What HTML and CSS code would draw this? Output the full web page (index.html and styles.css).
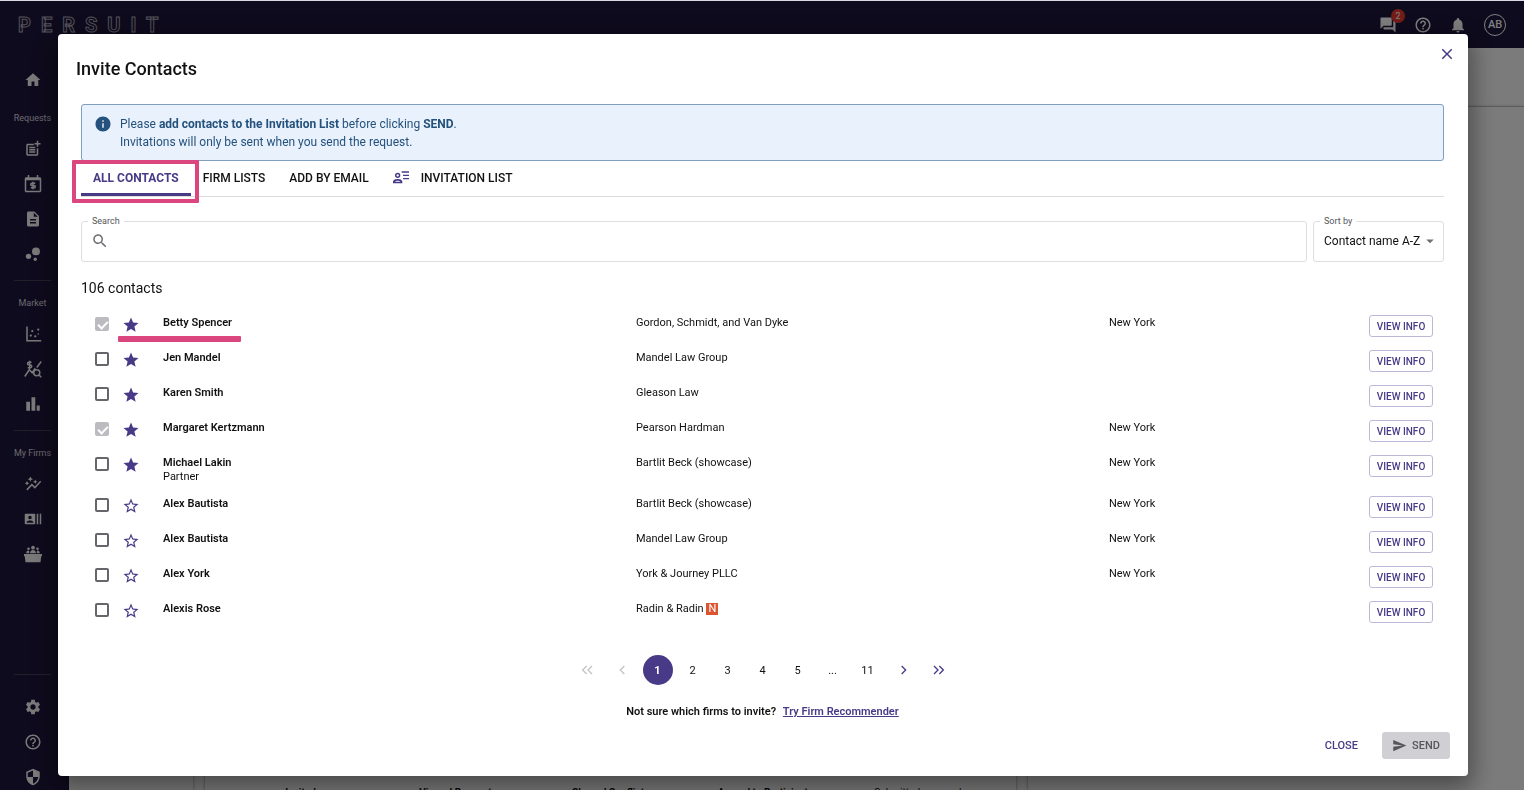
FILE: index.html
```html
<!DOCTYPE html>
<html lang="en">
<head>
    <meta charset="UTF-8">
    <meta name="viewport" content="width=device-width, initial-scale=1.0">
    <title>Invite Contacts</title>
    <link rel="stylesheet" href="styles.css">
</head>
<body>

    <!-- Icon definitions -->
    <svg class="icon-defs" aria-hidden="true">
        <symbol id="help" viewBox="0 0 24 24"><path d="M11 18h2v-2h-2v2zm1-16C6.48 2 2 6.48 2 12s4.48 10 10 10 10-4.48 10-10S17.52 2 12 2zm0 18c-4.41 0-8-3.59-8-8s3.59-8 8-8 8 3.59 8 8-3.59 8-8 8zm0-14c-2.21 0-4 1.79-4 4h2c0-1.1.9-2 2-2s2 .9 2 2c0 2-3 1.75-3 5h2c0-2.25 3-2.5 3-5 0-2.21-1.79-4-4-4z"/></symbol>
        <symbol id="star" viewBox="0 0 24 24"><path d="M12 17.27 18.18 21l-1.64-7.03L22 9.24l-7.19-.61L12 2 9.19 8.63 2 9.24l5.46 4.73L5.82 21z"/></symbol>
        <symbol id="star-border" viewBox="0 0 24 24"><path d="m22 9.24-7.19-.62L12 2 9.19 8.63 2 9.24l5.46 4.73L5.82 21 12 17.27 18.18 21l-1.63-7.03L22 9.24zM12 15.4l-3.76 2.27 1-4.28-3.32-2.88 4.38-.38L12 6.1l1.71 4.04 4.38.38-3.32 2.88 1 4.28L12 15.4z"/></symbol>
    </svg>

    <div class="app">
        <header class="topbar">
            <div class="logo">PERSUIT</div>
            <div class="topbar-actions">
                <button class="top-button" aria-label="Messages">
                    <svg class="icon" viewBox="0 0 24 24"><path d="M21 6h-2v9H6v2c0 .55.45 1 1 1h11l4 4V7c0-.55-.45-1-1-1zm-4 6V3c0-.55-.45-1-1-1H3c-.55 0-1 .45-1 1v14l4-4h10c.55 0 1-.45 1-1z"/></svg>
                    <span class="badge">2</span>
                </button>
                <button class="top-button" aria-label="Help"><svg class="icon"><use href="#help"/></svg></button>
                <button class="top-button" aria-label="Notifications">
                    <svg class="icon" viewBox="0 0 24 24"><path d="M12 22c1.1 0 2-.9 2-2h-4c0 1.1.89 2 2 2zm6-6v-5c0-3.07-1.64-5.64-4.5-6.32V4c0-.83-.67-1.5-1.5-1.5s-1.5.67-1.5 1.5v.68C7.63 5.36 6 7.92 6 11v5l-2 2v1h16v-1l-2-2z"/></svg>
                </button>
                <button class="avatar">AB</button>
            </div>
        </header>

        <div class="main">
            <nav class="sidebar">
                <a href="#" class="nav-item" aria-label="Home"><svg class="icon" viewBox="0 0 24 24"><path d="M10 20v-6h4v6h5v-8h3L12 3 2 12h3v8z"/></svg></a>

                <div class="nav-label">Requests</div>
                <a href="#" class="nav-item" aria-label="New request"><svg class="icon" viewBox="0 0 24 24"><path d="M17 19H5V7h8V5H5c-1.1 0-2 .9-2 2v12c0 1.1.9 2 2 2h12c1.1 0 2-.9 2-2v-8h-2z"/><path d="M19 1h-2v3h-3v2h3v3h2V6h3V4h-3zM7 9h8v2H7zM7 12h8v2H7zM7 15h8v2H7z"/></svg></a>
                <a href="#" class="nav-item" aria-label="Billing"><svg class="icon" viewBox="0 0 24 24"><path d="M21 3h-2V0h-2v3H7V0H5v3H3c-1.1 0-2 .9-2 2v16c0 1.1.9 2 2 2h18c1.1 0 2-.9 2-2V5c0-1.1-.9-2-2-2zm0 18H3V7h18z"/><path class="line" d="M15 11h-4.5a1.5 1.5 0 0 0 0 3h3a1.5 1.5 0 0 1 0 3H9M12 9v10"/></svg></a>
                <a href="#" class="nav-item" aria-label="Documents"><svg class="icon" viewBox="0 0 24 24"><path d="M14 2H6c-1.1 0-2 .9-2 2v16c0 1.1.9 2 2 2h12c1.1 0 2-.9 2-2V8l-6-6zm2 16H8v-2h8v2zm0-4H8v-2h8v2zm-3-5V3.5L18.5 9H13z"/></svg></a>
                <a href="#" class="nav-item" aria-label="Insights"><svg class="icon" viewBox="0 0 24 24"><circle cx="6" cy="15" r="3.5"/><circle cx="15" cy="19" r="2.2"/><circle cx="16" cy="8.5" r="5.3"/></svg></a>

                <hr class="nav-divider">
                <div class="nav-label">Market</div>
                <a href="#" class="nav-item" aria-label="Market map"><svg class="icon" viewBox="0 0 24 24"><path d="M3 2h2v18h18v2H3z"/><circle cx="9" cy="14" r="1.5"/><circle cx="11" cy="8" r="1.5"/><circle cx="15" cy="15" r="1.5"/><circle cx="19" cy="6" r="1.5"/><circle cx="19" cy="12" r="1"/></svg></a>
                <a href="#" class="nav-item" aria-label="Rates"><svg class="icon" viewBox="0 0 24 24"><path class="line" d="m1 22 6-9 4 4 4-6M17 10l6-8M10 3H6.5a1.8 1.8 0 0 0 0 3.6h2a1.8 1.8 0 0 1 0 3.6H5M7.5 1v11M20 20l3 3"/><circle class="line" cx="17" cy="17" r="4"/></svg></a>
                <a href="#" class="nav-item" aria-label="Reports"><svg class="icon" viewBox="0 0 24 24"><path d="M3 9h5v12H3zM10 3h5v18h-5zM17 14h4v7h-4z"/></svg></a>

                <hr class="nav-divider">
                <div class="nav-label">My Firms</div>
                <a href="#" class="nav-item" aria-label="Performance"><svg class="icon" viewBox="0 0 24 24"><path d="M14.06 9.94 12 9l2.06-.94L15 6l.94 2.06L18 9l-2.06.94L15 12zM4 14l.94-2.06L7 11l-2.06-.94L4 8l-.94 2.06L1 11l2.06.94zM8.5 9l1.09-2.41L12 5.5 9.59 4.41 8.5 2 7.41 4.41 5 5.5l2.41 1.09zM4.5 20.5l6-6.01 4 4L23 8.93l-1.41-1.41-7.09 7.97-4-4L3 19z"/></svg></a>
                <a href="#" class="nav-item" aria-label="Firm contacts"><svg class="icon" viewBox="0 0 24 24"><path d="M21 5v14h2V5h-2zm-4 14h2V5h-2v14zM14 5H2c-.55 0-1 .45-1 1v12c0 .55.45 1 1 1h12c.55 0 1-.45 1-1V6c0-.55-.45-1-1-1zM8 7.75c1.24 0 2.25 1.01 2.25 2.25S9.24 12.25 8 12.25 5.75 11.24 5.75 10 6.76 7.75 8 7.75zM12.5 17h-9v-.75c0-1.5 3-2.25 4.5-2.25s4.5.75 4.5 2.25V17z"/></svg></a>
                <a href="#" class="nav-item" aria-label="Panels"><svg class="icon" viewBox="0 0 24 24"><path d="M0 12h24v3h-1l-1 8H2l-1-8H0z"/><circle cx="12" cy="3.5" r="2.5"/><circle cx="6" cy="5" r="1.7"/><circle cx="18" cy="5" r="1.7"/><path d="M8 11c0-6 8-6 8 0zM3 11c0-4 3-4.5 4-3v3zM21 11c0-4-3-4.5-4-3v3z"/></svg></a>

                <div class="nav-bottom">
                    <hr class="nav-divider">
                    <a href="#" aria-label="Settings"><svg class="icon" viewBox="0 0 24 24"><path d="M19.14 12.94c.04-.3.06-.61.06-.94 0-.32-.02-.64-.07-.94l2.03-1.58c.18-.14.23-.41.12-.61l-1.92-3.32c-.12-.22-.37-.29-.59-.22l-2.39.96c-.5-.38-1.03-.7-1.62-.94l-.36-2.54c-.04-.24-.24-.41-.48-.41h-3.84c-.24 0-.43.17-.47.41l-.36 2.54c-.59.24-1.13.57-1.62.94l-2.39-.96c-.22-.08-.47 0-.59.22L2.74 8.87c-.12.21-.08.47.12.61l2.03 1.58c-.05.3-.09.63-.09.94s.02.64.07.94l-2.03 1.58c-.18.14-.23.41-.12.61l1.92 3.32c.12.22.37.29.59.22l2.39-.96c.5.38 1.03.7 1.62.94l.36 2.54c.05.24.24.41.48.41h3.84c.24 0 .44-.17.47-.41l.36-2.54c.59-.24 1.13-.56 1.62-.94l2.39.96c.22.08.47 0 .59-.22l1.92-3.32c.12-.22.07-.47-.12-.61l-2.01-1.58zM12 15.6c-1.98 0-3.6-1.62-3.6-3.6s1.62-3.6 3.6-3.6 3.6 1.62 3.6 3.6-1.62 3.6-3.6 3.6z"/></svg></a>
                    <a href="#" aria-label="Support"><svg class="icon"><use href="#help"/></svg></a>
                    <a href="#" aria-label="Security"><svg class="icon" viewBox="0 0 24 24"><path d="M12 1 3 5v6c0 5.55 3.84 10.74 9 12 5.16-1.26 9-6.45 9-12V5l-9-4zm0 11h7c-.53 4.12-3.28 7.79-7 8.94V12H5V6.3l7-3.11V12z"/></svg></a>
                </div>
            </nav>

            <div class="page">
                <div class="page-header"></div>
                <div class="page-columns">
                    <div class="panel"></div>
                    <div class="panel stages">
                        <span>Invited</span>
                        <span>Viewed Request</span>
                        <span>Cleared Conflicts</span>
                        <span>Agreed to Participate</span>
                        <span class="stage-open">Submitted proposals</span>
                    </div>
                    <div class="panel"></div>
                </div>
            </div>
        </div>
    </div>

    <div class="backdrop">
        <div class="modal" role="dialog" aria-labelledby="modalTitle">
            <div class="modal-header">
                <h2 id="modalTitle">Invite Contacts</h2>
                <button class="close-icon" aria-label="Close dialog"><svg class="icon" viewBox="0 0 24 24"><path d="M19 6.41 17.59 5 12 10.59 6.41 5 5 6.41 10.59 12 5 17.59 6.41 19 12 13.41 17.59 19 19 17.59 13.41 12z"/></svg></button>
            </div>

            <div class="modal-body">
                <div class="alert">
                    <svg class="icon" viewBox="0 0 24 24"><path d="M12 2C6.48 2 2 6.48 2 12s4.48 10 10 10 10-4.48 10-10S17.52 2 12 2zm1 15h-2v-6h2v6zm0-8h-2V7h2v2z"/></svg>
                    <p>Please <strong>add contacts to the Invitation List</strong> before clicking <strong>SEND</strong>.<br>Invitations will only be sent when you send the request.</p>
                </div>

                <div class="tabs" role="tablist">
                    <button class="tab active" role="tab" aria-selected="true">ALL CONTACTS<span class="highlight-box"></span></button>
                    <button class="tab" role="tab">FIRM LISTS</button>
                    <button class="tab" role="tab">ADD BY EMAIL</button>
                    <button class="tab" role="tab">
                        <svg class="icon" viewBox="0 0 24 24"><path d="M13 2h11v2H13zM15 7h9v2h-9zM15 12h9v2h-9z"/><path fill-rule="evenodd" d="M7 4a4 4 0 1 1 0 8 4 4 0 0 1 0-8zm0 2.200a1.800 1.800 0 1 0 0 3.600 1.800 1.800 0 0 0 0-3.600zM0 20v-2.500C0 14.500 4.500 13.500 7 13.500s7 1 7 4V20zm2.500-2.200h9C10.500 16.500 8.500 16 7 16s-3.500.5-4.500 1.800z"/></svg>
                        INVITATION LIST
                    </button>
                </div>

                <div class="filters">
                    <div class="field search-field">
                        <label for="search">Search</label>
                        <svg class="icon" viewBox="0 0 24 24"><path d="M15.5 14h-.79l-.28-.27C15.41 12.59 16 11.11 16 9.5 16 5.91 13.09 3 9.5 3S3 5.91 3 9.5 5.91 16 9.5 16c1.61 0 3.09-.59 4.23-1.57l.27.28v.79l5 4.99L20.49 19l-4.99-5zm-6 0C7.01 14 5 11.99 5 9.5S7.01 5 9.5 5 14 7.01 14 9.5 11.99 14 9.5 14z"/></svg>
                        <input type="text" id="search">
                    </div>
                    <div class="field sort-field">
                        <label for="sortBy">Sort by</label>
                        <select id="sortBy">
                            <option>Contact name A-Z</option>
                            <option>Contact name Z-A</option>
                        </select>
                        <svg class="icon" viewBox="0 0 24 24"><path d="m7 10 5 5 5-5z"/></svg>
                    </div>
                </div>

                <p class="count">106 contacts</p>

                <table class="contacts">
                    <colgroup>
                        <col class="col-check">
                        <col class="col-star">
                        <col class="col-name">
                        <col class="col-firm">
                        <col>
                        <col class="col-action">
                    </colgroup>
                    <tbody>
                        <tr>
                            <td><input type="checkbox" aria-label="Betty Spencer" checked disabled></td>
                            <td><button class="star" aria-label="Favorite"><svg class="icon"><use href="#star"/></svg></button></td>
                            <td><strong>Betty Spencer</strong><span class="highlight-line"></span></td>
                            <td>Gordon, Schmidt, and Van Dyke</td>
                            <td>New York</td>
                            <td><button class="view-info">VIEW INFO</button></td>
                        </tr>
                        <tr>
                            <td><input type="checkbox" aria-label="Jen Mandel"></td>
                            <td><button class="star" aria-label="Favorite"><svg class="icon"><use href="#star"/></svg></button></td>
                            <td><strong>Jen Mandel</strong></td>
                            <td>Mandel Law Group</td>
                            <td></td>
                            <td><button class="view-info">VIEW INFO</button></td>
                        </tr>
                        <tr>
                            <td><input type="checkbox" aria-label="Karen Smith"></td>
                            <td><button class="star" aria-label="Favorite"><svg class="icon"><use href="#star"/></svg></button></td>
                            <td><strong>Karen Smith</strong></td>
                            <td>Gleason Law</td>
                            <td></td>
                            <td><button class="view-info">VIEW INFO</button></td>
                        </tr>
                        <tr>
                            <td><input type="checkbox" aria-label="Margaret Kertzmann" checked disabled></td>
                            <td><button class="star" aria-label="Favorite"><svg class="icon"><use href="#star"/></svg></button></td>
                            <td><strong>Margaret Kertzmann</strong></td>
                            <td>Pearson Hardman</td>
                            <td>New York</td>
                            <td><button class="view-info">VIEW INFO</button></td>
                        </tr>
                        <tr>
                            <td><input type="checkbox" aria-label="Michael Lakin"></td>
                            <td><button class="star" aria-label="Favorite"><svg class="icon"><use href="#star"/></svg></button></td>
                            <td><strong>Michael Lakin</strong><br>Partner</td>
                            <td>Bartlit Beck (showcase)</td>
                            <td>New York</td>
                            <td><button class="view-info">VIEW INFO</button></td>
                        </tr>
                        <tr>
                            <td><input type="checkbox" aria-label="Alex Bautista"></td>
                            <td><button class="star" aria-label="Favorite"><svg class="icon"><use href="#star-border"/></svg></button></td>
                            <td><strong>Alex Bautista</strong></td>
                            <td>Bartlit Beck (showcase)</td>
                            <td>New York</td>
                            <td><button class="view-info">VIEW INFO</button></td>
                        </tr>
                        <tr>
                            <td><input type="checkbox" aria-label="Alex Bautista"></td>
                            <td><button class="star" aria-label="Favorite"><svg class="icon"><use href="#star-border"/></svg></button></td>
                            <td><strong>Alex Bautista</strong></td>
                            <td>Mandel Law Group</td>
                            <td>New York</td>
                            <td><button class="view-info">VIEW INFO</button></td>
                        </tr>
                        <tr>
                            <td><input type="checkbox" aria-label="Alex York"></td>
                            <td><button class="star" aria-label="Favorite"><svg class="icon"><use href="#star-border"/></svg></button></td>
                            <td><strong>Alex York</strong></td>
                            <td>York &amp; Journey PLLC</td>
                            <td>New York</td>
                            <td><button class="view-info">VIEW INFO</button></td>
                        </tr>
                        <tr>
                            <td><input type="checkbox" aria-label="Alexis Rose"></td>
                            <td><button class="star" aria-label="Favorite"><svg class="icon"><use href="#star-border"/></svg></button></td>
                            <td><strong>Alexis Rose</strong></td>
                            <td>Radin &amp; Radin <span class="tag">N</span></td>
                            <td></td>
                            <td><button class="view-info">VIEW INFO</button></td>
                        </tr>
                    </tbody>
                </table>

                <nav class="pagination" aria-label="Pages">
                    <button disabled aria-label="First page"><svg class="icon" viewBox="0 0 24 24"><path class="line" d="m10 6-6 6 6 6M18 6l-6 6 6 6"/></svg></button>
                    <button disabled aria-label="Previous page"><svg class="icon" viewBox="0 0 24 24"><path class="line" d="m14 6-6 6 6 6"/></svg></button>
                    <button class="current">1</button>
                    <button>2</button>
                    <button>3</button>
                    <button>4</button>
                    <button>5</button>
                    <span>...</span>
                    <button>11</button>
                    <button class="arrow" aria-label="Next page"><svg class="icon" viewBox="0 0 24 24"><path class="line" d="m10 6 6 6-6 6"/></svg></button>
                    <button class="arrow" aria-label="Last page"><svg class="icon" viewBox="0 0 24 24"><path class="line" d="m6 6 6 6-6 6M14 6l6 6-6 6"/></svg></button>
                </nav>

                <p class="hint">Not sure which firms to invite? <a href="#">Try Firm Recommender</a></p>
            </div>

            <div class="modal-footer">
                <button class="close-button">CLOSE</button>
                <button class="send-button" disabled><svg class="icon" viewBox="0 0 24 24"><path d="M2 21 23 12 2 3v7l15 2-15 2z"/></svg>SEND</button>
            </div>
        </div>
    </div>

</body>
</html>
```

FILE: styles.css
```css
* {
    box-sizing: border-box;
}

html, body {
    height: 100%;
}

body {
    margin: 0;
    overflow: hidden;
    font-family: Roboto, "Liberation Sans", sans-serif;
    font-size: 11px;
    color: #111;
    border-top: 1px solid #d9dae0;
}

h2, p {
    margin: 0;
}

button, input, select {
    font-family: inherit;
    color: inherit;
}

button {
    padding: 0;
    border: none;
    background: none;
    cursor: pointer;
}

.icon-defs {
    position: absolute;
    width: 0;
    height: 0;
}

.icon {
    display: block;
    flex: none;
    width: 18px;
    height: 18px;
    fill: currentColor;
}

.line {
    fill: none;
    stroke: currentColor;
    stroke-width: 2;
}

/* Application behind the dialog */
.app {
    display: flex;
    flex-direction: column;
    height: 100%;
    overflow: hidden;
    background-color: #f6f6f6;
}

.topbar {
    display: flex;
    flex: none;
    justify-content: space-between;
    align-items: center;
    height: 47px;
    padding: 0 18px;
    background-color: #1e163c;
    color: #fff;
}

.logo {
    font-size: 20px;
    font-weight: bold;
    letter-spacing: 10px;
    color: transparent;
    -webkit-text-stroke: 1px #a5a2b0;
}

.topbar-actions {
    display: flex;
    align-items: center;
    gap: 17px;
}

.top-button {
    position: relative;
}

.badge {
    position: absolute;
    top: -7px;
    right: -8px;
    width: 14px;
    height: 14px;
    border-radius: 50%;
    background-color: #e8382f;
    font-size: 9px;
    line-height: 14px;
    text-align: center;
}

.avatar {
    width: 22px;
    height: 22px;
    border: 1px solid #fff;
    border-radius: 50%;
    font-size: 11px;
    font-weight: 500;
}

.main {
    display: flex;
    flex: 1;
    min-height: 0;
}

.sidebar {
    display: flex;
    flex: none;
    flex-direction: column;
    align-items: center;
    width: 69px;
    padding: 14px 4px 4px 0;
    background-color: #1e163c;
    color: #fff;
}

.sidebar a {
    color: #f5f5f5;
}

.nav-item {
    display: flex;
    align-items: center;
    height: 35px;
}

.nav-label {
    margin-top: 9px;
    font-size: 9px;
    line-height: 25px;
    color: #d5d3dc;
}

.nav-divider {
    width: 37px;
    margin: 9px 0 0;
    border: none;
    border-top: 1px solid #464058;
}

.nav-divider + .nav-label {
    margin-top: 10px;
}

.nav-bottom {
    display: flex;
    flex-direction: column;
    align-items: center;
    gap: 17px;
    margin-top: auto;
}

.nav-bottom .nav-divider {
    margin: 0 0 6px;
}

.page {
    display: flex;
    flex: 1;
    flex-direction: column;
}

.page-header {
    height: 59px;
    border-bottom: 1px solid #dcdcdc;
}

.page-columns {
    display: grid;
    flex: 1;
    grid-template-columns: 124px 811px 1fr;
    gap: 12px;
}

.panel {
    box-shadow: 0 0 3px rgba(0, 0, 0, 0.4);
}

.stages {
    display: grid;
    grid-template-columns: repeat(5, 1fr);
    align-items: end;
    height: calc(100% + 9px);
    padding: 0 18px;
    font-size: 10px;
    font-weight: bold;
    line-height: 12px;
    text-align: center;
}

.stage-open {
    font-weight: normal;
}

/* Dialog */
.backdrop {
    position: fixed;
    inset: 1px 0 0;
    padding: 33px 56px 14px 58px;
    background-color: rgba(0, 0, 0, 0.5);
}

.modal {
    border-radius: 4px;
    background-color: #fff;
    box-shadow: 0 8px 24px 4px rgba(0, 0, 0, 0.4);
}

.modal-header {
    display: flex;
    justify-content: space-between;
    align-items: flex-start;
    padding: 11px 12px 23px 18px;
}

.modal-header h2 {
    padding-top: 12px;
    font-size: 18px;
    font-weight: 500;
    line-height: 24px;
}

.close-icon {
    color: #483a87;
}

.modal-body {
    padding: 0 24px 0 23px;
}

.alert {
    display: flex;
    gap: 8px;
    padding: 10px 12px 9px;
    border: 1px solid #7f9fbe;
    border-radius: 3px;
    background-color: #e9f1fd;
    color: #24527c;
    font-size: 12px;
    line-height: 18px;
}

.alert strong {
    font-weight: bold;
}

.tabs {
    display: flex;
    height: 36px;
    border-bottom: 1px solid #dcdcdc;
}

.tab {
    display: flex;
    position: relative;
    align-items: center;
    gap: 12px;
    padding: 2px 12px 0;
    border-bottom: 3px solid transparent;
    font-size: 12px;
    font-weight: 500;
}

.tab .icon {
    width: 16px;
    height: 16px;
    color: #483a87;
}

.tab.active {
    border-bottom-color: #483a87;
    color: #483a87;
    font-weight: bold;
}

.highlight-box {
    position: absolute;
    inset: -1px -8px -10px -9px;
    z-index: 1;
    border: 4px solid #dc467f;
    border-radius: 1px;
}

.filters {
    display: flex;
    gap: 6px;
    margin-top: 24px;
}

.field {
    display: flex;
    position: relative;
    align-items: center;
    height: 41px;
    padding-bottom: 2px;
    border: 1px solid #dedee0;
    border-radius: 3px;
}

.field label {
    position: absolute;
    top: -7px;
    left: 6px;
    padding: 0 4px;
    background-color: #fff;
    color: #55555a;
    font-size: 9px;
    line-height: 12px;
}

.field input, .field select {
    width: 100%;
    height: 100%;
    border: none;
    outline: none;
    background: none;
    font-size: 12px;
}

.field .icon {
    color: #6f6f75;
}

.search-field {
    flex: 1;
    padding-left: 9px;
}

.sort-field {
    width: 131px;
}

.sort-field select {
    padding: 0 20px 0 10px;
    appearance: none;
}

.sort-field .icon {
    position: absolute;
    right: 4px;
    pointer-events: none;
}

.count {
    margin: 16px 0 13px;
    font-size: 14px;
    line-height: 20px;
}

.contacts {
    width: 100%;
    table-layout: fixed;
    border-collapse: collapse;
    line-height: 14px;
}

.contacts strong {
    font-weight: 600;
}

.contacts tr {
    height: 35px;
}

.contacts td {
    position: relative;
    padding: 5px 0 8px;
    vertical-align: top;
}

.contacts td:first-child {
    padding: 6px 0 0 14px;
}

.contacts td:last-child {
    padding: 4px 0 0;
}

.col-check {
    width: 41px;
}

.col-star {
    width: 41px;
}

.col-name, .col-firm {
    width: 34.7%;
}

.col-action {
    width: 75px;
}

.contacts input {
    display: block;
    appearance: none;
    width: 14px;
    height: 14px;
    margin: 0;
    border: 2px solid #66656a;
    border-radius: 2px;
}

.contacts input:checked {
    border-color: #bcbbbf;
    background-color: #bcbbbf;
}

.contacts input:checked::after {
    content: "";
    display: block;
    width: 4px;
    height: 8px;
    margin-left: 3px;
    border: solid #fff;
    border-width: 0 2px 2px 0;
    transform: rotate(45deg);
}

.star {
    display: block;
    color: #483a87;
}

.view-info {
    display: block;
    width: 64px;
    height: 22px;
    border: 1px solid #bdb8d8;
    border-radius: 3px;
    color: #483a87;
    font-size: 10px;
    font-weight: 500;
}

.highlight-line {
    position: absolute;
    top: 25px;
    left: -45px;
    width: 123px;
    height: 6px;
    border-radius: 1px;
    background-color: #dc467f;
}

.tag {
    display: inline-block;
    width: 12px;
    background-color: #dc5532;
    color: #fff;
    line-height: 12px;
    text-align: center;
}

.pagination {
    display: flex;
    justify-content: center;
    gap: 5px;
    margin-top: 23px;
}

.pagination button, .pagination span {
    display: flex;
    justify-content: center;
    align-items: center;
    width: 30px;
    height: 30px;
    border-radius: 50%;
    font-size: 11px;
}

.pagination button:disabled {
    color: #c4c4c8;
}

.pagination .icon {
    width: 16px;
    height: 16px;
}

.pagination .current {
    background-color: #483a87;
    color: #fff;
    font-weight: bold;
}

.pagination .arrow {
    color: #483a87;
}

.hint {
    margin-top: 20px;
    font-weight: 600;
    line-height: 14px;
    text-align: center;
}

.hint a {
    margin-left: 4px;
    color: #483a87;
}

.modal-footer {
    display: flex;
    justify-content: flex-end;
    align-items: center;
    gap: 24px;
    padding: 13px 18px 17px;
}

.modal-footer button {
    font-size: 11px;
    font-weight: 500;
}

.close-button {
    color: #483a87;
}

.send-button {
    display: flex;
    justify-content: center;
    align-items: center;
    gap: 5px;
    width: 68px;
    height: 27px;
    border-radius: 3px;
    background-color: #d0cfd4;
}

.modal-footer .send-button {
    color: #57565b;
}

.send-button .icon {
    width: 15px;
    height: 15px;
}
```
